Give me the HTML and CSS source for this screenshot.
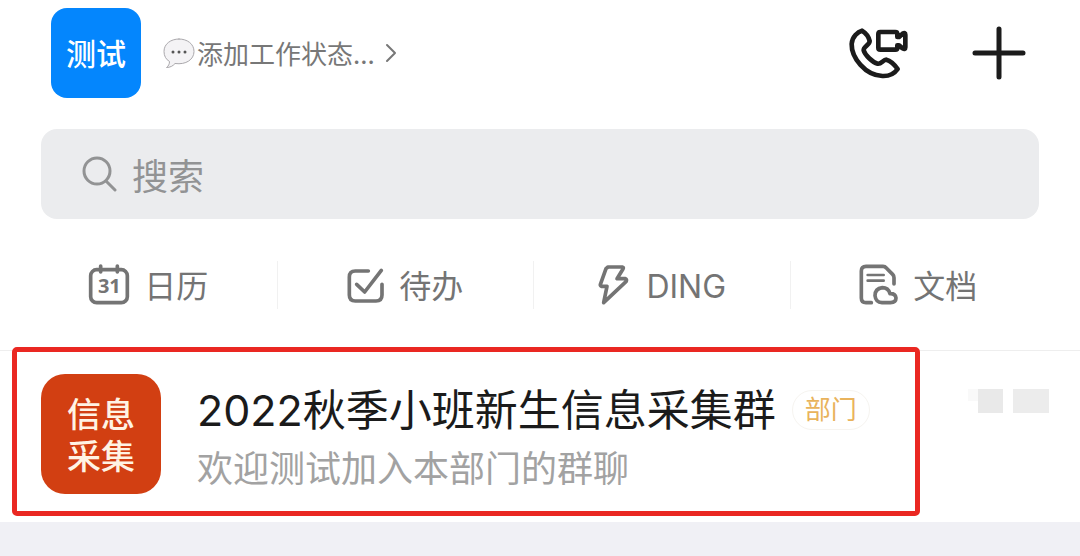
FILE: index.html
```html
<!DOCTYPE HTML>
<html lang="zh-CN">
<head>
<meta charset="utf-8">
<meta name="viewport" content="width=device-width, initial-scale=1">
<title>消息</title>
<link rel="stylesheet" href="styles.css">
</head>

<body>
<main class="page">
	<header class="top">
		<a href="#" class="me">测试</a>
		<button type="button" class="status">
			<svg class="bubble" viewBox="0 0 32 32" aria-hidden="true">
				<path d="M16 2C7.500 2 1 7 1 14.500C1 19 3 22.500 6.500 24.500C6.500 27 5.500 29 3.500 30.500C7 30.500 10 29 12 26.500C23 28 31 22.500 31 14.500C31 7 24.500 2 16 2Z" />
				<circle cx="10" cy="15" r="1.500" /><circle cx="16" cy="15" r="1.500" /><circle cx="22" cy="15" r="1.500" />
			</svg>
			<span>添加工作状态...</span>
			<svg class="arrow" viewBox="0 0 12 20" aria-hidden="true"><path d="M2 2L10 10L2 18" /></svg>
		</button>
		<div class="actions">
			<button type="button" aria-label="通话">
				<svg class="call" viewBox="54 50 186 162" aria-hidden="true">
					<path d="M96 64C84 67 66 83 65 104C64 145 106 198 157 200C178 201 194 192 203 179C193 165 181 154 169 151C159 151 154 165 143 163C127 159 105 137 101 123C100 112 119 107 119 95C116 82 106 70 96 64Z" />
					<path d="M151 68H196Q202 68 202 74V83H207L218 73Q226 69 226 76V114Q226 122 218 117L207 108H202V115Q202 121 196 121H151Q145 121 145 115V74Q145 68 151 68Z" />
				</svg>
			</button>
			<button type="button" aria-label="新建">
				<svg class="plus" viewBox="0 0 54 54" aria-hidden="true"><path d="M27 3V51M3 27H51" /></svg>
			</button>
		</div>
	</header>

	<label class="search">
		<svg viewBox="0 0 36 36" aria-hidden="true"><circle cx="15" cy="15" r="13" /><path d="M24 25L33 34" /></svg>
		<input type="search" placeholder="搜索" aria-label="搜索">
	</label>

	<nav class="tabs">
		<a href="#">
			<svg class="cal" viewBox="57 42 126 126" aria-hidden="true">
				<rect x="65" y="59" width="110" height="99" rx="18" />
				<path d="M95 48V66M145 48V66" />
				<text x="121" y="130" text-anchor="middle">31</text>
			</svg>
			<span>日历</span>
		</a>
		<a href="#">
			<svg class="todo" viewBox="51 48 114 114" aria-hidden="true">
				<path d="M115 63H76Q58 63 58 81V135Q58 153 76 153H138Q156 153 156 135V103" />
				<path d="M80 103L104 126L154 61" />
			</svg>
			<span>待办</span>
		</a>
		<a href="#">
			<svg class="bolt" viewBox="54 40 99 126" aria-hidden="true">
				<path d="M87 49H130Q135 50 132 55L114 84H139Q145 87 141 93L74 156L84 107H67Q62 105 65 99L81 54Z" />
			</svg>
			<span>DING</span>
		</a>
		<a href="#">
			<svg class="doc" viewBox="57 42 120 126" aria-hidden="true">
				<path d="M94 158H78Q64 158 64 144V63Q64 49 78 49H129Q135 49 139 54L158 73Q162 77 162 83V102" />
				<path class="thin" d="M83 75H131M83 92H131" />
				<path d="M126 158H151Q168 157 168 144Q166 130 150 131Q145 113 127 113Q105 116 105 137Q107 157 126 158Z" />
			</svg>
			<span>文档</span>
		</a>
	</nav>

	<section class="chat">
		<a href="#" class="item">
			<span class="pic"><span>信息</span><span>采集</span></span>
			<span class="info">
				<span class="name"><span>2022秋季小班新生信息采集群</span><em>部门</em></span>
				<span class="msg">欢迎测试加入本部门的群聊</span>
			</span>
			<span class="time"><i></i><i></i><i></i></span>
		</a>
		<div class="mark"></div>
	</section>
</main>
</body>
</html>
```

FILE: styles.css
```css
* {margin:0; padding:0; box-sizing:border-box;}

body{
	background:#f0f0f5;
	color:#1b1b1b;
	font-family:"Noto Sans CJK SC", "Noto Sans", sans-serif;
}
a{color:inherit; text-decoration:none;}
button{border:0; background:none; font:inherit; color:inherit; cursor:pointer;}
svg{display:block; flex:none; fill:none; stroke:currentColor; stroke-linecap:round; stroke-linejoin:round;}

.page{background:#fff;}

/* top bar */
.top{
	display:flex;
	align-items:center;
	padding:8px 54px 0 51px;
}
.me{
	width:90px;
	height:90px;
	border-radius:16px;
	background:#0486fd;
	color:#fff;
	font-size:30px;
	font-weight:500;
	line-height:88px;
	text-align:center;
}
.status{
	display:flex;
	align-items:center;
	margin-left:22px;
	color:#777;
	font-size:26px;
	line-height:40px;
}
.bubble{width:32px; height:32px; margin-right:2px;}
.bubble path{fill:#f4f3f5; stroke:#aaa8ac;}
.bubble circle{fill:#555; stroke:none;}
.arrow{width:12px; height:20px; margin-left:10px; stroke-width:2;}
.actions{
	display:flex;
	align-items:center;
	gap:62px;
	margin-left:auto;
}
.call{width:62px; height:54px; stroke-width:14;}
.plus{width:54px; height:54px; stroke-width:5;}

.search{
	display:flex;
	align-items:center;
	gap:14px;
	height:90px;
	margin:31px 41px 0;
	padding:0 41px;
	border-radius:16px;
	background:#ebecee;
	color:#929394;
}
.search svg{width:36px; height:36px; stroke-width:3;}
.search input{
	flex:1;
	min-width:0;
	border:0;
	outline:0;
	background:none;
	font:inherit;
	font-size:36px;
	color:#333;
}
.search input::placeholder{color:#929394; opacity:1;}

/* shortcuts */
.tabs{
	display:grid;
	grid-template-columns:repeat(4, 1fr);
	margin-top:42px;
	padding:0 34px 0 20px;
}
.tabs a{
	display:flex;
	align-items:center;
	justify-content:center;
	gap:14px;
	height:48px;
	color:#747474;
	font-family:Inter, "Noto Sans CJK SC", sans-serif;
	font-size:32px;
	line-height:44px;
}
.tabs a+a{border-left:1px solid #f1f1f1;}
.tabs span{padding-top:4px;}
.tabs svg{stroke-width:11;}
.cal{width:42px; height:42px;}
.cal text{fill:currentColor; stroke:none; font:bold 60px "Noto Sans", sans-serif;}
.todo{width:38px; height:38px;}
.bolt{width:33px; height:42px; margin-right:2px;}
.doc{width:40px; height:42px;}
.tabs .thin{stroke-width:8;}

/* chat list */
.chat{
	position:relative;
	margin-top:41px;
	border-top:1px solid #eee;
}
.item{
	display:flex;
	padding:23px 31px 28px 41px;
}
.pic{
	width:120px;
	height:120px;
	padding:18px 0;
	border-radius:24px;
	background:#d23f12;
	color:#fff3e4;
	font-size:34px;
	font-weight:500;
	line-height:42px;
	text-align:center;
}
.pic span{display:block;}
.info{
	flex:1;
	min-width:0;
	padding:8px 0 0 36px;
}
.name{
	display:flex;
	align-items:center;
	gap:16px;
	font-family:Inter, "Noto Sans CJK SC", sans-serif;
	font-size:43px;
	line-height:56px;
	white-space:nowrap;
}
.name em{
	padding:0 12px;
	border:1px solid #f6f4f0;
	border-radius:20px;
	color:#e9b35c;
	font-size:26px;
	font-style:normal;
	line-height:38px;
}
.msg{
	display:block;
	color:#a2a2a2;
	font-size:36px;
	line-height:56px;
}
.time{display:flex; padding-top:15px;}
.time i{width:10px; height:12px; background:#f9f9f9;}
.time i+i{width:25px; height:24px; background:#e9e9e9;}
.time i+i+i{width:36px; margin-left:10px; background:#ececec;}

/* red frame over the row */
.mark{
	position:absolute;
	top:-4px;
	right:160px;
	bottom:6px;
	left:12px;
	border:5px solid #ea2822;
	border-radius:5px;
	pointer-events:none;
}
```
